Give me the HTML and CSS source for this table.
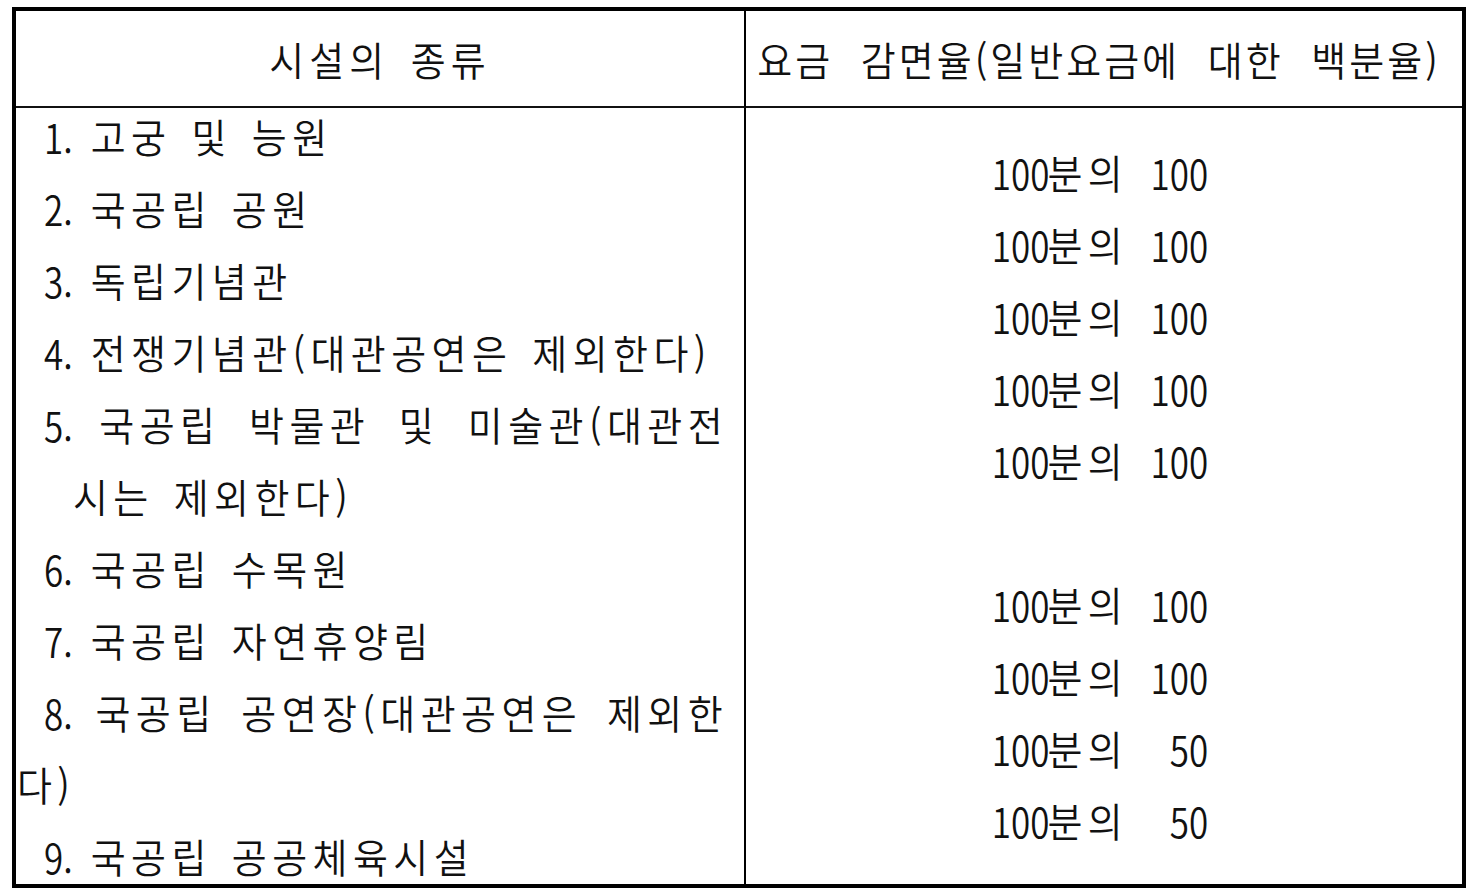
FILE: index.html
```html
<!DOCTYPE html>
<html lang="ko">
<head>
<meta charset="utf-8">
<title>시설의 종류 및 요금 감면율</title>
<link rel="stylesheet" href="styles.css">
</head>
<body>
<div class="page">
  <table class="fees">
    <colgroup><col class="col-kind"><col class="col-rate"></colgroup>
    <thead>
      <tr>
        <th class="c1 head"><span class="stretch kind-title">시설의 종류</span></th>
        <th class="c2 head"><span class="stretch rate-title">요금 감면율(일반요금에 대한 백분율)</span></th>
      </tr>
    </thead>
    <tbody>
      <tr>
        <td class="c1 list">
          <div class="lines">
            <div class="line item"><span class="n">1.</span> 고궁 및 능원</div>
            <div class="line item"><span class="n">2.</span> 국공립 공원</div>
            <div class="line item"><span class="n">3.</span> 독립기념관</div>
            <div class="line item"><span class="n">4.</span> 전쟁기념관(대관공연은 제외한다)</div>
            <div class="line item just"><span class="n">5.</span> 국공립 박물관 및 미술관(대관전</div>
            <div class="line cont">시는 제외한다)</div>
            <div class="line item"><span class="n">6.</span> 국공립 수목원</div>
            <div class="line item"><span class="n">7.</span> 국공립 자연휴양림</div>
            <div class="line item just"><span class="n">8.</span> 국공립 공연장(대관공연은 제외한</div>
            <div class="line flush">다)</div>
            <div class="line item"><span class="n">9.</span> 국공립 공공체육시설</div>
          </div>
        </td>
        <td class="c2 rates">
          <div class="lines">
            <div class="line"><span class="n">100</span>분의 <span class="n val">100</span></div>
            <div class="line"><span class="n">100</span>분의 <span class="n val">100</span></div>
            <div class="line"><span class="n">100</span>분의 <span class="n val">100</span></div>
            <div class="line"><span class="n">100</span>분의 <span class="n val">100</span></div>
            <div class="line"><span class="n">100</span>분의 <span class="n val">100</span></div>
            <div class="line blank"></div>
            <div class="line"><span class="n">100</span>분의 <span class="n val">100</span></div>
            <div class="line"><span class="n">100</span>분의 <span class="n val">100</span></div>
            <div class="line"><span class="n">100</span>분의 <span class="n val">50</span></div>
            <div class="line"><span class="n">100</span>분의 <span class="n val">50</span></div>
          </div>
        </td>
      </tr>
    </tbody>
  </table>
</div>
</body>
</html>
```

FILE: styles.css
```css
html, body {
  margin: 0;
  padding: 0;
  background: #ffffff;
}

.page {
  padding: 7px 12px 0 12px;
}

.fees {
  width: 1454px;
  table-layout: fixed;
  border-collapse: separate;
  border-spacing: 0;
  border: 4px solid #000;
  font-family: "Noto Sans CJK KR", "Noto Sans", sans-serif;
  font-size: 38px;
  font-weight: 350;
  color: #111;
}

.col-kind { width: 730px; }

.c1 {
  border-right: 2px solid #000;
}

.head {
  padding: 0;
  height: 95px;
  line-height: 93px;
  font-weight: 350;
  text-align: center;
  border-bottom: 2px solid #111;
  white-space: nowrap;
  vertical-align: middle;
}

.stretch {
  display: inline-block;
  transform: scaleY(1.05);
}

.kind-title {
  letter-spacing: 5px;
  word-spacing: 6px;
  margin-left: 0;
}

.rate-title {
  letter-spacing: 3px;
  word-spacing: 14px;
  margin-right: 10px;
}

.list,
.rates {
  padding: 0;
  vertical-align: middle;
}

.list {
  padding-left: 1px;
  padding-right: 16px;
}

.lines {
  height: 776px;
  display: flex;
  flex-direction: column;
  justify-content: center;
}

.line {
  flex: none;
  height: 72px;
  line-height: 72px;
  white-space: nowrap;
  letter-spacing: 5.4px;
  word-spacing: 4px;
  transform: scaleY(1.05);
}

.item {
  padding-left: 27px;
}

.cont {
  padding-left: 56px;
}

.flush {
  padding-left: 0;
}

.just {
  white-space: normal;
  text-align: justify;
  text-align-last: justify;
}

.n {
  display: inline-block;
  font-size: 35px;
  letter-spacing: 0;
  margin-right: -2px;
  transform: scaleY(1.1);
}

.rates .line {
  text-align: center;
  padding-right: 8px;
}

.val {
  width: 58px;
  margin-left: 2px;
  margin-right: 0;
  text-align: right;
}
```
